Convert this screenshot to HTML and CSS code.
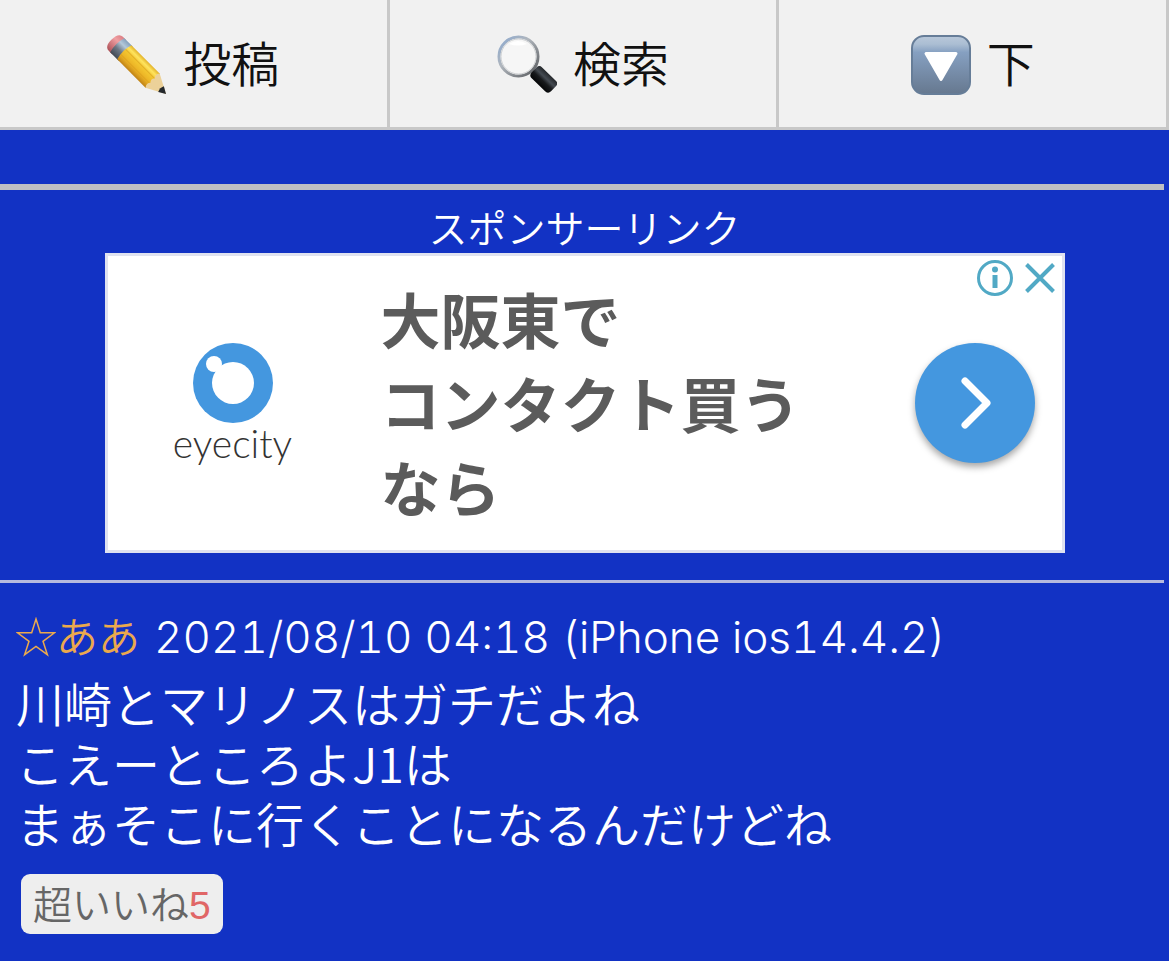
FILE: index.html
```
<!DOCTYPE html>
<html lang="ja">
<head>
<meta charset="utf-8">
<meta name="viewport" content="width=device-width, initial-scale=1">
<title>掲示板</title>
<link rel="stylesheet" href="styles.css">
</head>
<body>
<nav class="toolbar">
  <a class="tool" href="#post">
    <svg class="tool-icon" viewBox="0 0 60 60" aria-hidden="true">
      <defs>
        <linearGradient id="wood" gradientUnits="userSpaceOnUse" x1="0" y1="-11" x2="0" y2="11">
          <stop offset="0" stop-color="#dba51c"/><stop offset=".22" stop-color="#ffe45e"/><stop offset=".4" stop-color="#f3c62f"/><stop offset=".7" stop-color="#eab024"/><stop offset="1" stop-color="#b87a12"/>
        </linearGradient>
        <linearGradient id="metal" gradientUnits="userSpaceOnUse" x1="0" y1="-11" x2="0" y2="11">
          <stop offset="0" stop-color="#7c99b6"/><stop offset=".3" stop-color="#b3c8da"/><stop offset=".6" stop-color="#6c7784"/><stop offset="1" stop-color="#3c434c"/>
        </linearGradient>
        <linearGradient id="rubber" gradientUnits="userSpaceOnUse" x1="0" y1="-11" x2="0" y2="11">
          <stop offset="0" stop-color="#d97a80"/><stop offset=".35" stop-color="#f0a0a3"/><stop offset="1" stop-color="#a84b52"/>
        </linearGradient>
      </defs>
      <g transform="translate(59 59) rotate(45)">
        <path d="M-66-10h-5q-6 0-6 10t6 10h5z" fill="url(#rubber)"/>
        <path d="M-69-10h12q-3 10 0 20h-12q-3-10 0-20z" fill="url(#metal)"/>
        <path d="M-59-10h40l4 3v14l-4 3h-40q-3-10 0-20z" fill="url(#wood)"/>
        <path d="M-60-3h44M-60 4h44" stroke="#d99d1b" stroke-width="1" opacity=".6"/>
        <path d="M-19-10L0 0l-19 10q-3-4 0-7-3-3 0-6-3-3 0-7z" fill="#ecd199"/>
        <path d="M-7-4L0 0l-7 4q-2-4 0-8z" fill="#24282c"/>
      </g>
    </svg>
    <span class="tool-label">投稿</span>
  </a>
  <a class="tool" href="#search">
    <svg class="tool-icon" viewBox="0 0 60 60" aria-hidden="true">
      <defs>
        <linearGradient id="rim" x1="0" y1="0" x2="1" y2="1">
          <stop offset="0" stop-color="#8ba9d0"/><stop offset=".4" stop-color="#b0b6bd"/><stop offset="1" stop-color="#56585b"/>
        </linearGradient>
        <linearGradient id="grip" x1="0" y1="0" x2="0" y2="1">
          <stop offset="0" stop-color="#24272a"/><stop offset=".35" stop-color="#454b52"/><stop offset=".6" stop-color="#181a1c"/><stop offset="1" stop-color="#050607"/>
        </linearGradient>
      </defs>
      <path d="M34 35l6 6" stroke="#7d8084" stroke-width="5"/>
      <circle cx="21.500" cy="21.500" r="19.500" fill="#f6f6f6" stroke="url(#rim)" stroke-width="3"/>
      <circle cx="21.500" cy="21.500" r="17.500" fill="none" stroke="#cfd1d3" stroke-width="1"/>
      <path d="M12 9q9-6 18 0-9 3-18 0z" fill="#fff"/>
      <rect x="51" y="-8" width="27" height="15" rx="4" transform="rotate(44)" fill="url(#grip)"/>
    </svg>
    <span class="tool-label">検索</span>
  </a>
  <a class="tool" href="#bottom">
    <svg class="tool-icon" viewBox="0 0 60 60" aria-hidden="true">
      <defs>
        <linearGradient id="key" x1="0" y1="0" x2="0" y2="1">
          <stop offset="0" stop-color="#b9c8da"/><stop offset=".14" stop-color="#abbed3"/><stop offset=".28" stop-color="#86a0c1"/><stop offset="1" stop-color="#66788f"/>
        </linearGradient>
      </defs>
      <rect x="1" y="1" width="58" height="58" rx="12" fill="url(#key)" stroke="#667d98" stroke-width="2"/>
      <path d="M15 18.500h30L30 44.500z" fill="#fff" stroke="#fff" stroke-width="3" stroke-linejoin="round"/>
    </svg>
    <span class="tool-label">下</span>
  </a>
</nav>
<main class="board">
  <hr class="rule rule-thick">
  <section class="sponsor">
    <p class="sponsor-label">スポンサーリンク</p>
    <div class="ad">
      <div class="brand">
        <svg class="brand-mark" viewBox="0 0 80 80" aria-hidden="true">
          <circle cx="40" cy="40" r="40" fill="#4497df"/>
          <circle cx="40" cy="40" r="21" fill="#fff"/>
          <circle cx="21" cy="21" r="8" fill="#fff"/>
        </svg>
        <span class="brand-name">eyecity</span>
      </div>
      <p class="ad-title">大阪東で<br>コンタクト買う<br>なら</p>
      <button class="ad-go" type="button" aria-label="開く">
        <svg viewBox="0 0 120 120" aria-hidden="true"><path d="M50 38l22 22-22 22" fill="none" stroke="#fff" stroke-width="7" stroke-linecap="round" stroke-linejoin="round"/></svg>
      </button>
      <div class="ad-controls">
        <button class="ad-control" type="button" aria-label="広告について">
          <svg viewBox="0 0 36 36" aria-hidden="true"><circle cx="18" cy="18" r="16.500" fill="none" stroke="#51a9c5" stroke-width="3"/><circle cx="18" cy="9.500" r="3" fill="#51a9c5"/><path d="M15.500 15h5v13h-5z" fill="#51a9c5"/></svg>
        </button>
        <button class="ad-control" type="button" aria-label="広告を閉じる">
          <svg viewBox="0 0 36 36" aria-hidden="true"><path d="M4.500 4.500l27 27M31.500 4.500l-27 27" stroke="#51a9c5" stroke-width="4"/></svg>
        </button>
      </div>
    </div>
  </section>
  <hr class="rule">
  <article class="post">
    <header class="post-head">
      <span class="author">
        <svg class="star" viewBox="0 0 40 40" aria-hidden="true"><path d="M20 2l4.300 13.800H38.500L27 24.300l4.400 13.400L20 29.500 8.600 37.700 13 24.300 1.500 15.800h14.200z" fill="none" stroke="#eba94d" stroke-width="1.500"/></svg>
        <span class="author-name">ああ</span>
      </span>
      <span class="meta">2021/08/10 04:18 (iPhone ios14.4.2)</span>
    </header>
    <p class="post-body">川崎とマリノスはガチだよね<br>こえーところよJ1は<br>まぁそこに行くことになるんだけどね</p>
    <button class="like" type="button"><span class="like-label">超いいね</span><span class="like-count">5</span></button>
  </article>
</main>
</body>
</html>
```
FILE: styles.css
```
* { box-sizing: border-box; }

body {
  margin: 0;
  background: #1232c4;
  color: #fff;
  font-family: "Noto Sans CJK JP", sans-serif;
  font-weight: 350;
}

p { margin: 0; }

button {
  border: 0;
  padding: 0;
  font: inherit;
  cursor: pointer;
}

svg { display: block; }

.toolbar {
  display: grid;
  grid-template-columns: repeat(3, 1fr);
  border-bottom: 3px solid #c8c8c8;
  background: #f1f1f1;
}

.tool {
  display: flex;
  align-items: center;
  justify-content: center;
  gap: 16px;
  height: 127px;
  padding-top: 2px;
  border-right: 3px solid #c8c8c8;
  color: #111;
  font-size: 48px;
  line-height: 60px;
  text-decoration: none;
}

.tool-label { padding-bottom: 8px; }

.tool-icon {
  width: 60px;
  height: 60px;
}

.board { padding-top: 54px; }

.rule {
  height: 3px;
  margin: 0 5px 0 0;
  border: 0;
  background: #b6bade;
}

.rule-thick {
  height: 6px;
  background: #bfbfc3;
}

.sponsor { padding: 12px 0 27px; }

.sponsor-label {
  padding-bottom: 3px;
  font-size: 39px;
  line-height: 48px;
  text-align: center;
}

.ad {
  position: relative;
  display: grid;
  grid-template-columns: 250px 1fr 120px;
  align-items: center;
  max-width: 960px;
  min-height: 300px;
  margin: 0 auto;
  padding: 16px 27px 16px 0;
  border: 3px solid #dfe2f0;
  background: #fff;
}

.brand {
  display: flex;
  flex-direction: column;
  align-items: center;
}

.brand-mark {
  width: 80px;
  height: 80px;
}

.brand-name {
  color: #333;
  font-family: Lato, sans-serif;
  font-size: 39px;
  font-weight: 300;
  line-height: 40px;
}

.ad-title {
  padding: 0 0 2px 23px;
  color: #5b5b5b;
  font-size: 60px;
  font-weight: 700;
  line-height: 84px;
}

.ad-go {
  width: 120px;
  height: 120px;
  border-radius: 50%;
  background: #4497df;
  box-shadow: 0 4px 7px rgba(0, 0, 0, .35);
}

.ad-controls {
  position: absolute;
  top: 4px;
  right: 4px;
  display: flex;
  gap: 9px;
}

.ad-control {
  width: 36px;
  height: 36px;
  background: none;
}

.post { padding: 24px 16px; }

.post-head {
  display: flex;
  align-items: center;
  gap: 14px;
  font-size: 42px;
  line-height: 60px;
}

.author {
  display: flex;
  align-items: center;
  height: 60px;
  color: #eba94d;
}

.author-name { padding-bottom: 4px; }

.star {
  width: 40px;
  height: 40px;
}

.meta {
  font-family: Inter, sans-serif;
  font-size: 44px;
  font-variant-numeric: tabular-nums;
}

.post-body {
  margin-top: 5px;
  font-size: 48px;
  line-height: 60px;
}

.like {
  display: flex;
  align-items: center;
  height: 60px;
  margin: 22px 0 0 5px;
  padding: 0 12px;
  border-radius: 9px;
  background: #eee;
  color: #666;
  font-size: 39px;
  line-height: 60px;
}

.like-label { padding-bottom: 4px; }

.like-count {
  padding-top: 3px;
  color: #e06666;
  font-family: "Liberation Sans", Arial, sans-serif;
}
```
